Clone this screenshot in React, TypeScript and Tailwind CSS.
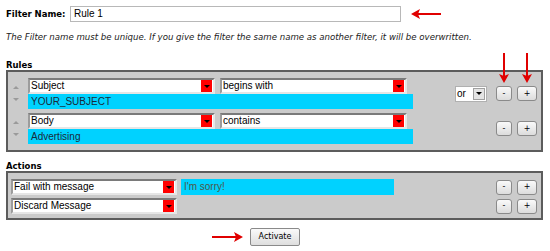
import React from 'react';

const LABEL = "font-['DejaVu_Sans',Verdana,sans-serif]";
const FIELD = "font-['Liberation_Sans',Arial,sans-serif]";

const ArrowLeft: React.FC<{ className?: string }> = ({ className }) => (
  <svg width="30" height="10" viewBox="0 0 30 10" className={className}>
    <line x1="6" y1="5" x2="30" y2="5" stroke="#e00000" strokeWidth="2" />
    <polygon points="0,5 9,0 7,5 9,10" fill="#e00000" />
  </svg>
);

const ArrowRight: React.FC<{ className?: string }> = ({ className }) => (
  <svg width="31" height="10" viewBox="0 0 31 10" className={className}>
    <line x1="0" y1="5" x2="25" y2="5" stroke="#e00000" strokeWidth="2" />
    <polygon points="31,5 22,0 24,5 22,10" fill="#e00000" />
  </svg>
);

const ArrowDown: React.FC<{ className?: string }> = ({ className }) => (
  <svg width="10" height="30" viewBox="0 0 10 30" className={className}>
    <line x1="5" y1="0" x2="5" y2="24" stroke="#e00000" strokeWidth="2" />
    <polygon points="5,30 0,21 5,23 10,21" fill="#e00000" />
  </svg>
);

const Select: React.FC<{ value: string; width: string }> = ({ value, width }) => (
  <div
    className={`${width} h-[16px] bg-white flex items-center border-2 border-t-[#7a7a7a] border-l-[#9c9c9c] border-r-[#e6e6e6] border-b-[#e6e6e6]`}
  >
    <span className={`${FIELD} flex-1 text-[10px] leading-none text-black pl-[1px] whitespace-nowrap overflow-hidden`}>
      {value}
    </span>
    <div className="w-[11px] h-[12px] bg-[#ff0000] flex items-center justify-center mr-[1px]">
      <div className="w-0 h-0 border-l-[3px] border-r-[3px] border-t-[3px] border-l-transparent border-r-transparent border-t-black" />
    </div>
  </div>
);

const Cyan: React.FC<{ value: string; width: string; height: string; muted?: boolean }> = ({ value, width, height, muted }) => (
  <div className={`${width} ${height} bg-[#00d2ff] flex items-center pl-[3px]`}>
    <span className={`${FIELD} text-[10px] leading-none whitespace-nowrap ${muted ? 'text-[#4d5749]' : 'text-[#1a2a3a]'}`}>
      {value}
    </span>
  </div>
);

const SmallBtn: React.FC<{ label: string; width: string }> = ({ label, width }) => (
  <div
    className={`${width} h-[15px] rounded-[3px] border border-[#8a8a8a] bg-gradient-to-b from-[#fafafa] to-[#dcdcdc] flex items-center justify-center ${LABEL} text-[8px] leading-none text-black`}
  >
    {label}
  </div>
);

const PlusMinus: React.FC = () => (
  <div className="flex items-center gap-[5px] ml-auto">
    <SmallBtn label="-" width="w-[16px]" />
    <SmallBtn label="+" width="w-[20px]" />
  </div>
);

const MoveArrows: React.FC = () => (
  <div className="w-[20px] h-[31px] flex flex-col justify-between py-[8px] pl-[5px]">
    <div className="w-0 h-0 border-l-[3px] border-r-[3px] border-b-[3px] border-l-transparent border-r-transparent border-b-[#9a9a9a]" />
    <div className="w-0 h-0 border-l-[3px] border-r-[3px] border-t-[3px] border-l-transparent border-r-transparent border-t-[#9a9a9a]" />
  </div>
);

const RuleRow: React.FC<{ field: string; op: string; value: string; withOr?: boolean }> = ({ field, op, value, withOr }) => (
  <div className="flex items-center pr-[4px]">
    <MoveArrows />
    <div className="w-[385px] flex flex-col">
      <div className="flex gap-[5px]">
        <Select value={field} width="w-[187px]" />
        <Select value={op} width="w-[187px]" />
      </div>
      <Cyan value={value} width="w-[385px]" height="h-[15px]" />
    </div>
    {withOr && (
      <div className="ml-[42px] w-[32px] h-[16px] bg-white border border-[#b0b0b0] flex items-center">
        <span className={`${FIELD} flex-1 text-[10px] leading-none pl-[1px]`}>or</span>
        <div className="w-[12px] h-[12px] bg-[#e4e4e4] border border-[#a0a0a0] mr-[1px] flex items-center justify-center">
          <div className="w-0 h-0 border-l-[3px] border-r-[3px] border-t-[3px] border-l-transparent border-r-transparent border-t-black" />
        </div>
      </div>
    )}
    {withOr ? (
      <div className="flex items-center gap-[5px] ml-[9px]">
        <SmallBtn label="-" width="w-[16px]" />
        <SmallBtn label="+" width="w-[20px]" />
      </div>
    ) : (
      <PlusMinus />
    )}
  </div>
);

const App: React.FC = () => {
  return (
    <div className="relative w-[550px] h-[251px] bg-white pl-[6px] pt-[6px] overflow-hidden">
      {/* filter name */}
      <div className="flex items-center h-[16px]">
        <span className={`${LABEL} w-[64px] text-[8.5px] font-bold text-black whitespace-nowrap`}>Filter Name:</span>
        <div className="w-[331px] h-[16px] border border-[#b8b8b8] flex items-center pl-[3px]">
          <span className={`${FIELD} text-[10px] leading-none text-black`}>Rule 1</span>
        </div>
        <ArrowLeft className="ml-[10px]" />
      </div>
      <p className={`${LABEL} mt-[10px] text-[8.6px] leading-[10px] italic text-[#222] whitespace-nowrap`}>
        The Filter name must be unique. If you give the filter the same name as another filter, it will be overwritten.
      </p>

      {/* rules */}
      <h3 className={`${LABEL} mt-[19px] text-[8.5px] leading-[9px] font-bold text-black`}>Rules</h3>
      <div className="w-[537px] h-[82px] border-2 border-[#5c5c5c] bg-[#cbcbcb] pt-[6px] flex flex-col gap-[4px]">
        <RuleRow field="Subject" op="begins with" value="YOUR_SUBJECT" withOr />
        <RuleRow field="Body" op="contains" value="Advertising" />
      </div>

      {/* actions */}
      <h3 className={`${LABEL} mt-[10px] text-[8.5px] leading-[9px] font-bold text-black`}>Actions</h3>
      <div className="w-[537px] h-[49px] border-2 border-[#5c5c5c] bg-[#cbcbcb] pt-[6px] pl-[3px] pr-[4px] flex flex-col gap-[3px]">
        <div className="flex items-center">
          <Select value="Fail with message" width="w-[166px]" />
          <div className="ml-[4px]">
            <Cyan value="I'm sorry!" width="w-[213px]" height="h-[16px]" muted />
          </div>
          <PlusMinus />
        </div>
        <div className="flex items-center">
          <Select value="Discard Message" width="w-[166px]" />
          <PlusMinus />
        </div>
      </div>

      {/* activate */}
      <div className="flex items-center mt-[8px]">
        <ArrowRight className="ml-[206px]" />
        <div
          className={`ml-[7px] w-[50px] h-[18px] border border-[#8a8a8a] rounded-[2px] bg-gradient-to-b from-[#fafafa] to-[#dedede] flex items-center justify-center ${LABEL} text-[8px] leading-none text-black`}
        >
          Activate
        </div>
      </div>

      {/* annotation arrows over the +/- buttons */}
      <ArrowDown className="absolute left-[499px] top-[53px]" />
      <ArrowDown className="absolute left-[522px] top-[53px]" />
    </div>
  );
};

export default App;
